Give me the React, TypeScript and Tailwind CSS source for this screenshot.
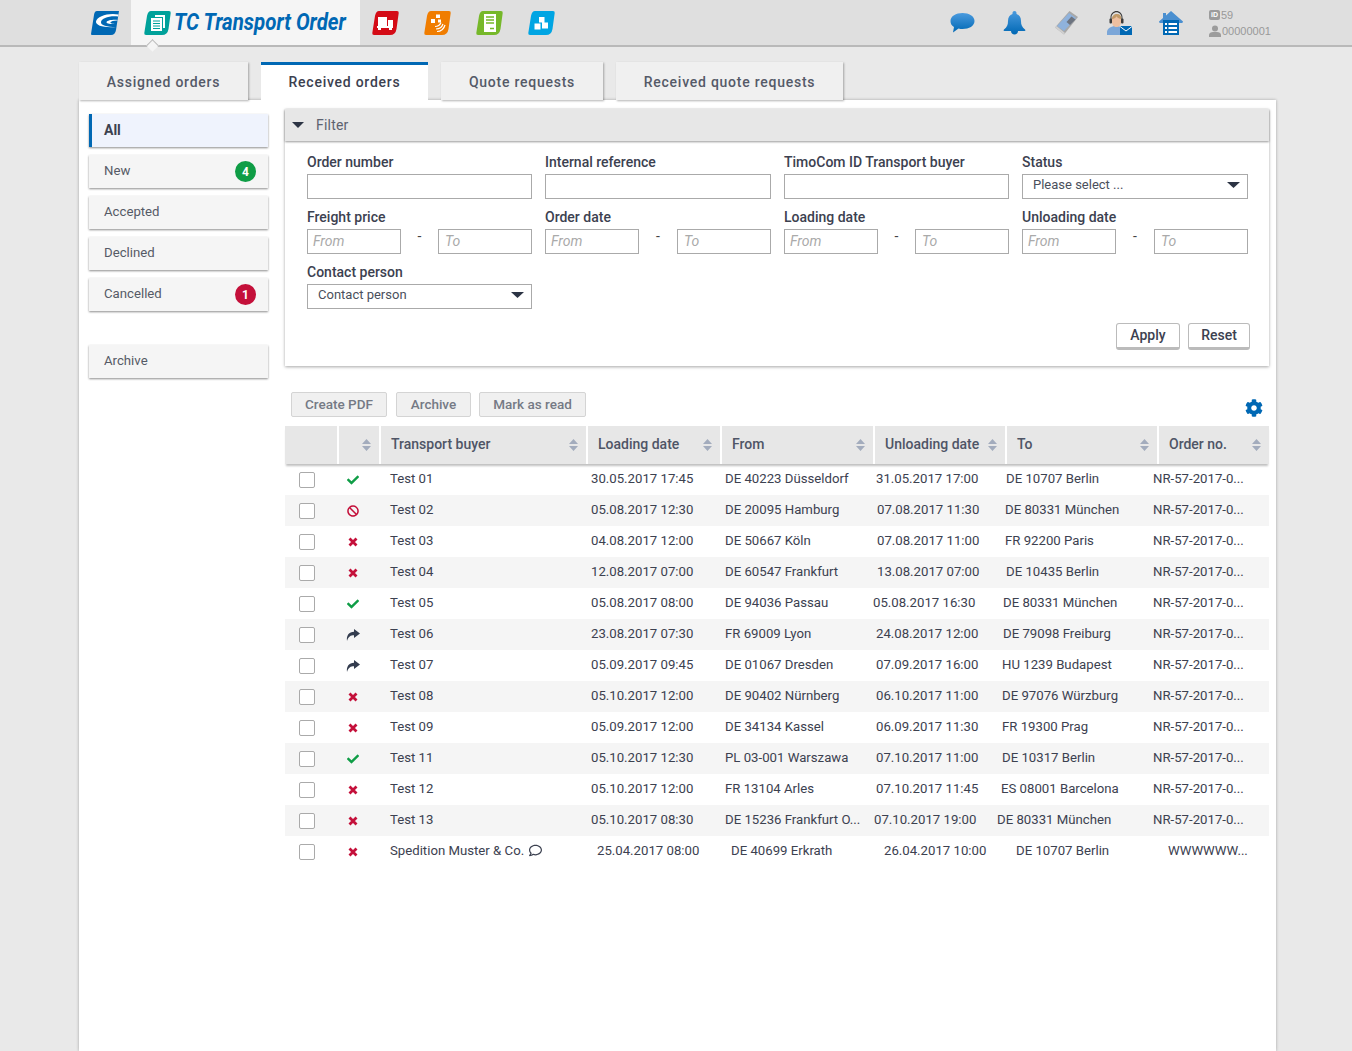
import { FaBan, FaCheck, FaCog, FaRegComment } from "react-icons/fa"

const tabs = [
  { label: "Assigned orders", w: "w-[169px]" },
  { label: "Received orders", w: "w-[167px]", active: true },
  { label: "Quote requests", w: "w-[162px]" },
  { label: "Received quote requests", w: "w-[227px]" },
]

const rows = [
  { s: "ok", buyer: "Test 01", load: "30.05.2017 17:45", from: "DE 40223 Düsseldorf", unload: "31.05.2017 17:00", to: "DE 10707 Berlin", fw: "w-[151px]", uw: "w-[130px]" },
  { s: "ban", buyer: "Test 02", load: "05.08.2017 12:30", from: "DE 20095 Hamburg", unload: "07.08.2017 11:30", to: "DE 80331 München", fw: "w-[152px]", uw: "w-[128px]" },
  { s: "x", buyer: "Test 03", load: "04.08.2017 12:00", from: "DE 50667 Köln", unload: "07.08.2017 11:00", to: "FR 92200 Paris", fw: "w-[152px]", uw: "w-[128px]" },
  { s: "x", buyer: "Test 04", load: "12.08.2017 07:00", from: "DE 60547 Frankfurt", unload: "13.08.2017 07:00", to: "DE 10435 Berlin", fw: "w-[152px]", uw: "w-[129px]" },
  { s: "ok", buyer: "Test 05", load: "05.08.2017 08:00", from: "DE 94036 Passau", unload: "05.08.2017 16:30", to: "DE 80331 München", fw: "w-[148px]", uw: "w-[130px]" },
  { s: "fwd", buyer: "Test 06", load: "23.08.2017 07:30", from: "FR 69009 Lyon", unload: "24.08.2017 12:00", to: "DE 79098 Freiburg", fw: "w-[151px]", uw: "w-[127px]" },
  { s: "fwd", buyer: "Test 07", load: "05.09.2017 09:45", from: "DE 01067 Dresden", unload: "07.09.2017 16:00", to: "HU 1239 Budapest", fw: "w-[151px]", uw: "w-[126px]" },
  { s: "x", buyer: "Test 08", load: "05.10.2017 12:00", from: "DE 90402 Nürnberg", unload: "06.10.2017 11:00", to: "DE 97076 Würzburg", fw: "w-[151px]", uw: "w-[126px]" },
  { s: "x", buyer: "Test 09", load: "05.09.2017 12:00", from: "DE 34134 Kassel", unload: "06.09.2017 11:30", to: "FR 19300 Prag", fw: "w-[151px]", uw: "w-[126px]" },
  { s: "ok", buyer: "Test 11", load: "05.10.2017 12:30", from: "PL 03-001 Warszawa", unload: "07.10.2017 11:00", to: "DE 10317 Berlin", fw: "w-[151px]", uw: "w-[126px]" },
  { s: "x", buyer: "Test 12", load: "05.10.2017 12:00", from: "FR 13104 Arles", unload: "07.10.2017 11:45", to: "ES 08001 Barcelona", fw: "w-[151px]", uw: "w-[125px]" },
  { s: "x", buyer: "Test 13", load: "05.10.2017 08:30", from: "DE 15236 Frankfurt O...", unload: "07.10.2017 19:00", to: "DE 80331 München", fw: "w-[149px]", uw: "w-[123px]" },
]

const headers = [
  { label: "", w: "w-[54px]", sort: false },
  { label: "", w: "w-[42px]", sort: true },
  { label: "Transport buyer", w: "w-[207px]", sort: true },
  { label: "Loading date", w: "w-[134px]", sort: true },
  { label: "From", w: "w-[153px]", sort: true },
  { label: "Unloading date", w: "w-[132px]", sort: true },
  { label: "To", w: "w-[152px]", sort: true },
  { label: "Order no.", w: "w-[110px]", sort: true },
]

function SortIcon() {
  return (
    <svg width="9" height="12" viewBox="0 0 9 12" className="shrink-0">
      <path d="M4.500 0 9 5H0zM0 7h9l-4.500 5z" fill="#a3acbd" />
    </svg>
  )
}

function Tile({ color, children }: { color: string; children?: React.ReactNode }) {
  return (
    <svg width="27" height="24" viewBox="0 0 27 24" className="shrink-0">
      <path d="M7 0h18q2 0 1.700 2l-2.200 16q-1 6-6.500 6H2q-2 0-1.700-2L3 5q1-5 4-5z" fill={color} />
      {children}
    </svg>
  )
}

function TopLogo() {
  return (
    <svg width="28" height="24" viewBox="0 0 28 24" className="shrink-0">
      <path d="M6 0h22l-3 19q-.8 5-5 5H1q-1 0-1-1L3 4q.5-4 3-4z" fill="#0068b4" />
      <path d="M27.500 3.500C17 1.500 6 5.500 5 10.500c-.5 4 8 6.500 20 5.500-9 0-15.500-1.500-15-5 .5-3.500 8-6.500 17-5.500z" fill="#fff" />
      <path d="M26.500 9c-5-.5-10 .5-11 2-.5 1.500 3.500 2.300 9.500 2-3.500 0-6-.5-5.500-1.700.5-1 3.500-2 7-1.800z" fill="#fff" />
    </svg>
  )
}

function ChatIcon() {
  return (
    <svg width="25" height="20" viewBox="0 0 25 20">
      <defs>
        <linearGradient id="chatFill" x1="0" y1="0" x2="0" y2="1">
          <stop offset="0" stopColor="#4a9ade" />
          <stop offset="1" stopColor="#0068b4" />
        </linearGradient>
      </defs>
      <path d="M12.500 0C19 0 24.500 3 24.500 8s-5.500 8-12 8c-1.500 0-2.500 0-4-.5L3 19.500l1-5.500C1.500 12.500.5 10.500.5 8 .5 3 6 0 12.500 0z" fill="url(#chatFill)" />
    </svg>
  )
}

function BellIcon() {
  return (
    <svg width="23" height="24" viewBox="0 0 23 24">
      <defs>
        <linearGradient id="bellFill" x1="0" y1="0" x2="0" y2="1">
          <stop offset="0" stopColor="#4a9ade" />
          <stop offset="1" stopColor="#0068b4" />
        </linearGradient>
      </defs>
      <path d="M11.500 0c1.200 0 2 .8 2 2v1c3 .8 4.500 3.500 4.500 7 0 4 1 6 4 8.500.8.700.5 1.500-.5 1.500H15c0 2-1.500 3.500-3.500 3.500S8 22 8 20H1.500c-1 0-1.300-.8-.5-1.500C4 16 5 14 5 10c0-3.500 1.500-6.200 4.500-7V2c0-1.200.8-2 2-2z" fill="url(#bellFill)" />
    </svg>
  )
}

function KeyboardIcon() {
  return (
    <svg width="23" height="24" viewBox="0 0 23 24">
      <path d="M14.500 0 23 6 9 23.500 0 16.500z" fill="#a8a8a8" />
      <path d="M14 2 21 7 9 20 2 15z" fill="#8fb2dc" />
      <path d="M16.500 5.500 20.500 8.500 15 14l-3.500-3z" fill="#6d7480" />
      <path d="M0 16.500 9 23.500 10 22 1.500 15z" fill="#d0d0d0" />
    </svg>
  )
}

function AgentIcon() {
  return (
    <svg width="25" height="24" viewBox="0 0 25 24">
      <path d="M0 24v-3c0-3 3-5 7-6h4c3 1 5 2 5 5v4z" fill="#7ba6d8" />
      <path d="M5 6h9v5c0 3-2 5-4.500 5S5 14 5 11z" fill="#eebfa0" />
      <path d="M5 8c0-3 2-5 5-5s4.500 2 4.500 5c-2 0-4-1-5-2.500C8.500 7 7 8 5 8z" fill="#c29a68" />
      <path d="M3.500 9V6.500c0-4 3-6.500 6-6.500s6 2.500 6 6.500V9h-1V6.500c0-3-2.500-5.200-5-5.200S4.500 3.500 4.500 6.500V9z" fill="#3a3a3a" />
      <rect x="2.500" y="7.500" width="2.500" height="5" rx="1" fill="#3a3a3a" />
      <rect x="14" y="7.500" width="2.500" height="5" rx="1" fill="#3a3a3a" />
      <rect x="13" y="15" width="12" height="9" fill="#0068b4" />
      <path d="M13 15.500l6 4.500 6-4.500" fill="none" stroke="#fff" strokeWidth="1" />
    </svg>
  )
}

function HomeIcon() {
  return (
    <svg width="24" height="24" viewBox="0 0 24 24">
      <path d="M12 0 24 10.500c0 1-.8 1.500-2 1.500H2c-1.200 0-2-.5-2-1.500L4 7V2h3v2.500z" fill="#4a8fd0" />
      <rect x="4" y="9" width="16" height="15" fill="#0068b4" />
      <path d="M6 12h2v2H6zm3.500 0H18v2H9.500zM6 16h2v2H6zm3.500 0H18v2H9.500zM6 20h2v2H6zm3.500 0H18v2H9.500z" fill="#fff" />
    </svg>
  )
}

function StatusIcon({ s }: { s: string }) {
  if (s === "ok") return <FaCheck className="text-[#0f9d46]" size={12} />
  if (s === "ban") return <FaBan className="text-[#c4103a]" size={12} />
  if (s === "fwd")
    return (
      <svg width="14" height="12" viewBox="0 0 14 12">
        <path d="M8 0 14 4.500 8 9V6.300C4.800 6.300 2.200 7.500 1 12 .2 6.500 3 3 8 2.800z" fill="#333c4e" />
      </svg>
    )
  return (
    <svg width="10" height="10" viewBox="0 0 10 10">
      <path d="M1.500 1.500l7 7M8.500 1.500l-7 7" stroke="#c4103a" strokeWidth="2.800" />
    </svg>
  )
}

function Field({ label, children }: { label: string; children: React.ReactNode }) {
  return (
    <div className="flex h-[55px] flex-col">
      <div className="h-[22px] text-[14px] leading-[20px] font-medium text-[#3c4150]">{label}</div>
      {children}
    </div>
  )
}

function TextBox() {
  return <div className="h-[25px] border border-[#aaaaaa] bg-white" />
}

function RangeBox() {
  return (
    <div className="flex h-[25px] items-start justify-between">
      <div className="h-[25px] w-[94px] border border-[#aaaaaa] pl-[5px] text-[14px] leading-[23px] text-[#aaaaaa] italic">From</div>
      <div className="text-[14px] leading-[15px] text-[#444444]">-</div>
      <div className="h-[25px] w-[94px] border border-[#aaaaaa] pl-[6px] text-[14px] leading-[23px] text-[#aaaaaa] italic">To</div>
    </div>
  )
}

function SelectBox({ text }: { text: string }) {
  return (
    <div className="flex h-[25px] items-center justify-between border border-[#aaaaaa] pr-[7px] pl-[10px] text-[13px] text-[#4a4f5c]">
      <span className="-mt-[4px]">{text}</span>
      <svg width="13" height="6" viewBox="0 0 13 6" className="-mt-[3px]">
        <path d="M0 0h13L6.500 6z" fill="#2c3444" />
      </svg>
    </div>
  )
}

function SideItem({ label, active, badge, badgeClass }: { label: string; active?: boolean; badge?: string; badgeClass?: string }) {
  return (
    <div
      className={`flex h-[33px] items-center justify-between shadow-[0_1px_2px_rgba(0,0,0,0.45)] ${
        active
          ? "border-l-[3px] border-[#0068b4] bg-[#eff3fd] pl-[12px] text-[14px] font-bold text-[#3c4150]"
          : "bg-[#f5f5f5] pl-[15px] text-[13.2px] text-[#555a66]"
      } pr-[12px]`}
    >
      <span className={active ? "" : "-mt-[2px]"}>{label}</span>
      {badge && (
        <span className={`flex size-[21px] items-center justify-center rounded-full text-[12px] font-bold text-white ${badgeClass}`}>{badge}</span>
      )}
    </div>
  )
}

export default function App() {
  return (
    <div className="h-[1051px] w-[1352px] overflow-hidden bg-[#e9e9e9] font-['Roboto',sans-serif] text-[14px] text-[#3c4150]">
      <header className="flex h-[47px] items-center border-b-2 border-[#b9b9b9] bg-[#dfdfdf]">
        <div className="ml-[91px]">
          <TopLogo />
        </div>
        <div className="relative ml-[12px] flex h-[45px] w-[229px] items-center bg-[#f5f5f5] pl-[13px]">
          <Tile color="#00a19a">
            <path d="M11 4h10v13h-2V6h-8z" fill="#fff" />
            <rect x="7" y="7" width="11" height="13" fill="#fff" />
            <path d="M9 10h7M9 12.500h7M9 15h7M9 17.500h7" stroke="#00a19a" strokeWidth="1" />
          </Tile>
          <span className="ml-[3px] origin-left scale-x-[0.89] text-[23px] leading-none font-bold whitespace-nowrap text-[#0068b4] italic">TC Transport Order</span>
          <div className="absolute bottom-0 left-[17px] size-[9px] translate-y-[5px] rotate-45 border-t border-l border-[#b9b9b9] bg-[#f5f5f5]" />
        </div>
        <div className="ml-[12px] flex gap-[25px]">
          <Tile color="#d40b16">
            <path d="M6 6h9v9H6zM16 9h5v8H5v-2h11z" fill="#fff" />
            <rect x="6" y="17" width="3" height="2" fill="#fff" />
            <rect x="17" y="17" width="3" height="2" fill="#fff" />
          </Tile>
          <Tile color="#f07d00">
            <path d="M12 3.500h4v3.500h-4zM7 8h4v4H7zM14 8.500h3v3h-3z" fill="#fff" />
            <path d="M11 15.500c3 0 5-1.500 6-4M12 18c3.500 0 6-2 7-5M13 20.500c4 0 7-3 8-6.500" fill="none" stroke="#fff" strokeWidth="1.200" />
          </Tile>
          <Tile color="#76b82a">
            <rect x="8" y="3" width="12" height="18" fill="#fff" />
            <path d="M10 6h8M10 9h8M10 12h8M14 17.500h4" stroke="#76b82a" strokeWidth="1.500" />
          </Tile>
          <Tile color="#00a5e3">
            <path d="M11 11.500h5.500V6H11zM6.500 18.500h6V12.500h-6zM14 17.500h6V11.500h-6z" fill="#fff" />
          </Tile>
        </div>
        <div className="ml-auto flex items-center">
          <ChatIcon />
          <div className="ml-[28px]"><BellIcon /></div>
          <div className="ml-[29px]"><KeyboardIcon /></div>
          <div className="ml-[29px]"><AgentIcon /></div>
          <div className="ml-[27px]"><HomeIcon /></div>
          <div className="mr-[83px] ml-[26px] flex w-[60px] flex-col font-['Liberation_Sans',sans-serif] text-[11px] leading-[16px] text-[#999999]">
            <div className="flex items-center gap-[1px]">
              <span className="flex h-[10px] w-[11px] items-center justify-center rounded-[2px] bg-[#9c9c9c] text-[7px] leading-none font-bold text-white">iD</span>
              <span>59</span>
            </div>
            <div className="flex items-center gap-[1px]">
              <svg width="12" height="12" viewBox="0 0 12 12" className="shrink-0">
                <circle cx="6" cy="3.500" r="3" fill="#9c9c9c" />
                <path d="M0 12V10c0-2 2-3 4-3h4c2 0 4 1 4 3v2z" fill="#9c9c9c" />
              </svg>
              <span>00000001</span>
            </div>
          </div>
        </div>
      </header>

      <div className="mt-[15px] ml-[79px] flex h-[38px] gap-[13px]">
        {tabs.map((t) => (
          <div
            key={t.label}
            className={`flex items-center justify-center text-[14px] font-medium tracking-[0.75px] ${t.w} ${
              t.active
                ? "relative z-10 h-[39px] border-t-[3px] border-[#0068b4] bg-white pb-[2px] text-[#3c4150]"
                : "bg-[#f0f0f0] pt-[2px] text-[#555a68] shadow-[1px_1px_2px_rgba(0,0,0,0.3)]"
            }`}
          >
            {t.label}
          </div>
        ))}
      </div>

      <main className="ml-[79px] flex h-[951px] w-[1197px] bg-white shadow-[0_0_3px_rgba(0,0,0,0.3)]">
        <aside className="ml-[10px] w-[179px] pt-[14px]">
          <div className="flex flex-col gap-[8px]">
            <SideItem label="All" active />
            <SideItem label="New" badge="4" badgeClass="bg-[#0f9d46]" />
            <SideItem label="Accepted" />
            <SideItem label="Declined" />
            <SideItem label="Cancelled" badge="1" badgeClass="bg-[#c4103a]" />
          </div>
          <div className="mt-[34px]">
            <SideItem label="Archive" />
          </div>
        </aside>

        <section className="ml-[17px] w-[984px] pt-[9px]">
          <div className="h-[257px] bg-white shadow-[0_1px_3px_rgba(0,0,0,0.35)]">
            <div className="flex h-[32px] items-center bg-[#e7e7e7] pl-[7px] text-[14px] text-[#5d6270] shadow-[0_1px_2px_rgba(0,0,0,0.4)]">
              <svg width="12" height="6" viewBox="0 0 12 6">
                <path d="M0 0h12L6 6z" fill="#2c3444" />
              </svg>
              <span className="ml-[12px] tracking-[0.2px]">Filter</span>
            </div>
            <div className="grid grid-cols-[225px_226px_225px_226px] gap-x-[13px] pt-[11px] pl-[22px]">
              <Field label="Order number"><TextBox /></Field>
              <Field label="Internal reference"><TextBox /></Field>
              <Field label="TimoCom ID Transport buyer"><TextBox /></Field>
              <Field label="Status"><SelectBox text="Please select ..." /></Field>
              <Field label="Freight price"><RangeBox /></Field>
              <Field label="Order date"><RangeBox /></Field>
              <Field label="Loading date"><RangeBox /></Field>
              <Field label="Unloading date"><RangeBox /></Field>
              <Field label="Contact person"><SelectBox text="Contact person" /></Field>
            </div>
            <div className="mt-[6px] flex justify-end gap-[8px] pr-[19px]">
              <button className="h-[27px] w-[64px] rounded-[3px] border border-b-[3px] border-[#bbbbbb] bg-white text-[14px] font-medium text-[#3c4150]">Apply</button>
              <button className="h-[27px] w-[62px] rounded-[3px] border border-b-[3px] border-[#bbbbbb] bg-white text-[14px] font-medium text-[#3c4150]">Reset</button>
            </div>
          </div>

          <div className="mt-[26px] flex h-[34px] items-start pl-[6px]">
            <button className="h-[25px] w-[96px] rounded-[2px] border border-[#d4d4d4] bg-[#f0f0f0] text-[13.5px] font-medium text-[#757a85]">Create PDF</button>
            <button className="ml-[9px] h-[25px] w-[75px] rounded-[2px] border border-[#d4d4d4] bg-[#f0f0f0] text-[13.5px] font-medium text-[#757a85]">Archive</button>
            <button className="ml-[8px] h-[25px] w-[107px] rounded-[2px] border border-[#d4d4d4] bg-[#f0f0f0] text-[13.5px] font-medium text-[#757a85]">Mark as read</button>
            <FaCog className="mt-[7px] mr-[6px] ml-auto text-[#0068b4]" size={18} />
          </div>

          <div className="relative z-10 flex h-[38px] bg-[#e7e7e7] shadow-[0_3px_2px_-1px_rgba(0,0,0,0.25)]">
            {headers.map((h, i) => (
              <div
                key={i}
                className={`flex items-center pr-[8px] pb-[1px] pl-[10px] font-medium text-[#4f5566] ${h.w} ${i === 1 ? "justify-end" : "justify-between"} ${i < headers.length - 1 ? "border-r-2 border-white" : ""}`}
              >
                {h.label && <span>{h.label}</span>}
                {h.sort && <SortIcon />}
              </div>
            ))}
          </div>

          {rows.map((r, i) => (
            <div key={r.buyer} className={`flex h-[31px] items-center text-[13.2px] ${i % 2 === 1 ? "bg-[#f5f5f5]" : "bg-white"}`}>
              <div className="ml-[14px] size-[16px] rounded-[2px] border border-[#aaaaaa] bg-white" />
              <div className="flex w-[75px] justify-center pl-[1px]"><StatusIcon s={r.s} /></div>
              <div className="w-[201px] pb-[2px] whitespace-nowrap">{r.buyer}</div>
              <div className="w-[134px] pb-[2px] whitespace-nowrap">{r.load}</div>
              <div className={`pb-[2px] whitespace-nowrap ${r.fw}`}>{r.from}</div>
              <div className={`pb-[2px] whitespace-nowrap ${r.uw}`}>{r.unload}</div>
              <div className="flex-1 pb-[2px] whitespace-nowrap">{r.to}</div>
              <div className="w-[116px] pb-[2px] whitespace-nowrap">NR-57-2017-0...</div>
            </div>
          ))}

          <div className="flex h-[31px] items-center bg-white text-[13.2px]">
            <div className="ml-[14px] size-[16px] rounded-[2px] border border-[#aaaaaa] bg-white" />
            <div className="flex w-[75px] justify-center pl-[1px]"><StatusIcon s="x" /></div>
            <div className="flex w-[207px] items-center gap-[5px] pb-[2px] whitespace-nowrap">
              Spedition Muster &amp; Co.
              <FaRegComment className="text-[#3c4150]" size={13} />
            </div>
            <div className="w-[134px] pb-[2px] whitespace-nowrap">25.04.2017 08:00</div>
            <div className="w-[153px] pb-[2px] whitespace-nowrap">DE 40699 Erkrath</div>
            <div className="w-[132px] pb-[2px] whitespace-nowrap">26.04.2017 10:00</div>
            <div className="flex-1 pb-[2px] whitespace-nowrap">DE 10707 Berlin</div>
            <div className="w-[101px] pb-[2px] whitespace-nowrap">WWWWWW...</div>
          </div>
        </section>
      </main>
    </div>
  )
}
